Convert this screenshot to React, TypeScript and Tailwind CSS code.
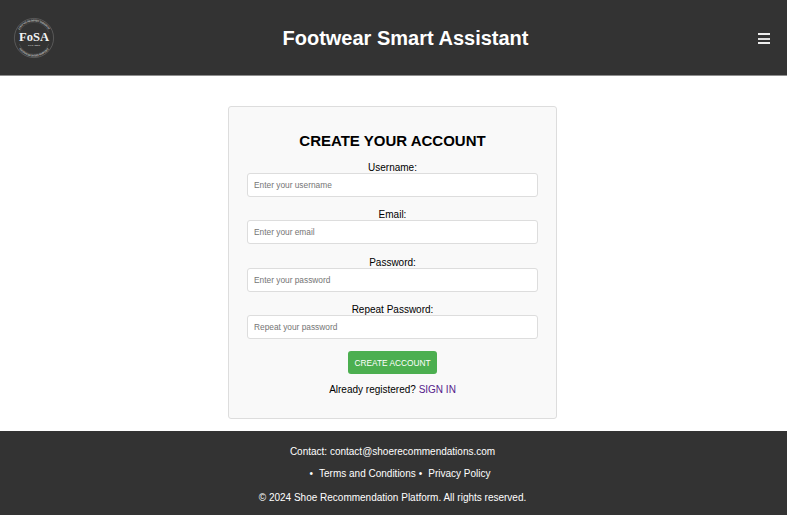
const fields = [
  { id: 'username', label: 'Username:', placeholder: 'Enter your username', type: 'text', gap: 'mb-[12px]' },
  { id: 'email', label: 'Email:', placeholder: 'Enter your email', type: 'email', gap: 'mb-[13px]' },
  { id: 'password', label: 'Password:', placeholder: 'Enter your password', type: 'password', gap: 'mb-[12px]' },
  { id: 'repeat', label: 'Repeat Password:', placeholder: 'Repeat your password', type: 'password', gap: '' },
];

function Logo() {
  return (
    <svg className="h-[42px] w-[42px]" viewBox="0 0 42 42" fill="none">
      <defs>
        <path id="ringTop" d="M4.4 21a16.6 16.6 0 0 1 33.2 0" />
        <path id="ringBottom" d="M2.5 21a18.5 18.5 0 0 0 37 0" />
      </defs>
      <circle cx="21" cy="21" r="19.6" stroke="#707070" strokeWidth="0.6" />
      <path d="M6.2 15.5a15.8 15.8 0 0 1 29.6 0M6.2 27a15.8 15.8 0 0 0 29.6 0" stroke="#555" strokeWidth="0.5" />
      <g fontFamily="'Liberation Serif', serif" fill="#c4c4c4" fontSize="2.8" fontWeight="700" textAnchor="middle">
        <text textLength="35"><textPath href="#ringTop" startOffset="50%" textLength="35">FOOTWEAR SMART ASSISTANT</textPath></text>
        <text textLength="35"><textPath href="#ringBottom" startOffset="50%" textLength="35">FOOTWEAR SMART ASSISTANT</textPath></text>
      </g>
      <text x="21" y="23.8" textAnchor="middle" textLength="30" lengthAdjust="spacingAndGlyphs" fontFamily="'Liberation Serif', serif" fontWeight="700" fontSize="11.5" fill="#f2f2f2">FoSA</text>
      <text x="21" y="29" textAnchor="middle" textLength="12" fontFamily="'Liberation Serif', serif" fontWeight="700" fontSize="2.6" fill="#ddd">EST. 2024</text>
    </svg>
  );
}

export default function App() {
  return (
    <div className="flex h-[515px] w-full flex-col bg-white font-['Liberation_Sans',Arial,sans-serif] text-[10px] leading-[11px] text-black">
      <header className="flex h-[76px] shrink-0 items-center justify-between border-b border-[#8e8e8e] bg-[#333] pl-[13px] pr-[17px] text-white">
        <Logo />
        <h1 className="mr-[2px] pt-[2px] text-[20px] font-bold leading-[23px]">Footwear Smart Assistant</h1>
        <button aria-label="Menu" className="mt-[2px] flex h-[11px] w-[12px] flex-col">
          <span className="mb-[3px] h-[2px] w-full bg-[#eee]" />
          <span className="mb-[2px] h-[2px] w-full bg-[#ddd]" />
          <span className="h-[2px] w-full bg-[#eee]" />
        </button>
      </header>

      <main className="flex flex-1 items-start pl-[228px] pt-[30px]">
        <form className="flex h-[313px] w-[329px] flex-col items-center rounded-[3px] border border-[#ddd] bg-[#f9f9f9] px-[18px] pt-[25px]">
          <h2 className="mb-[13px] text-[15px] font-bold leading-[17px]">CREATE YOUR ACCOUNT</h2>
          {fields.map((f) => (
            <div key={f.id} className={`flex w-full flex-col items-center ${f.gap}`}>
              <label htmlFor={f.id} className="h-[11px] leading-[12px]">{f.label}</label>
              <input
                id={f.id}
                type={f.type}
                placeholder={f.placeholder}
                className="h-[24px] w-full rounded-[3px] border border-[#ddd] bg-white px-[6px] text-[8.333px] placeholder:text-[#757575]"
              />
            </div>
          ))}
          <button type="button" className="mt-[12px] h-[23px] w-[89px] shrink-0 rounded-[3px] bg-[#4caf50] pt-[2px] text-[8.333px] text-white">
            CREATE ACCOUNT
          </button>
          <p className="mt-[10px]">
            Already registered? <a className="text-[#551a8b]">SIGN IN</a>
          </p>
        </form>
      </main>

      <footer className="flex h-[84px] shrink-0 flex-col items-center bg-[#333] pr-[2px] pt-[15px] text-white">
        <p>Contact: contact@shoerecommendations.com</p>
        <ul className="mt-[11px] flex pl-[15px]">
          <li className="flex"><span className="mr-[6px]">•</span>Terms and Conditions</li>
          <li className="ml-[3px] flex"><span className="mr-[6px]">•</span>Privacy Policy</li>
        </ul>
        <p className="mt-[13px]">© 2024 Shoe Recommendation Platform. All rights reserved.</p>
      </footer>
    </div>
  );
}
